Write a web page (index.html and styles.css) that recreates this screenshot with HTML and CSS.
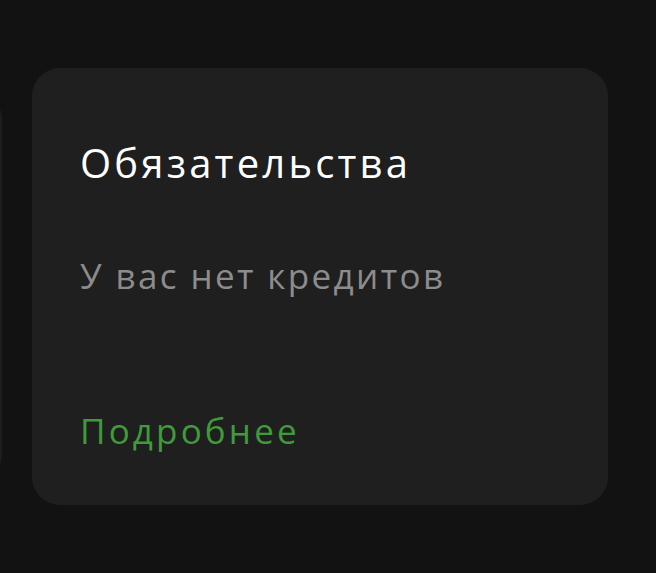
FILE: index.html
```html
<!DOCTYPE html>
<html lang="ru">
<head>
    <meta charset="UTF-8">
    <meta name="viewport" content="width=device-width, initial-scale=1.0">
    <title>Обязательства</title>
    <link rel="stylesheet" href="styles.css">
</head>
<body>
    <div class="track">
        <div class="card card-prev"></div>
        <div class="card">
            <h2 class="card-title">Обязательства</h2>
            <p class="card-text">У вас нет кредитов</p>
            <a href="#" class="card-link">Подробнее</a>
        </div>
    </div>
</body>
</html>
```

FILE: styles.css
```css
body {
    font-family: "Open Sans", "Noto Sans", sans-serif;
    background-color: #121212;
    margin: 0;
    padding: 0;
    overflow: hidden;
}
.track {
    display: flex;
    align-items: center;
    gap: 30px;
    padding-top: 68px;
    margin-left: -574px;
}
.card {
    flex: none;
    box-sizing: border-box;
    width: 576px;
    height: 437px;
    padding: 0 48px;
    background: #1f1f1f;
    border-radius: 28px;
    display: flex;
    flex-direction: column;
}
.card-prev {
    height: 392px;
    background: #1d1d1d;
}
.card-title {
    margin: 70px 0 0;
    font-size: 40px;
    font-weight: 400;
    line-height: 50px;
    letter-spacing: 0.08em;
    color: #fff;
}
.card-text {
    margin: 66px 0 0;
    font-size: 35px;
    line-height: 44px;
    letter-spacing: 0.068em;
    color: #8c8c8c;
}
.card-link {
    margin-top: auto;
    margin-bottom: 52px;
    font-size: 35px;
    line-height: 44px;
    letter-spacing: 0.09em;
    color: #3f9a3a;
    text-decoration: none;
}
```
